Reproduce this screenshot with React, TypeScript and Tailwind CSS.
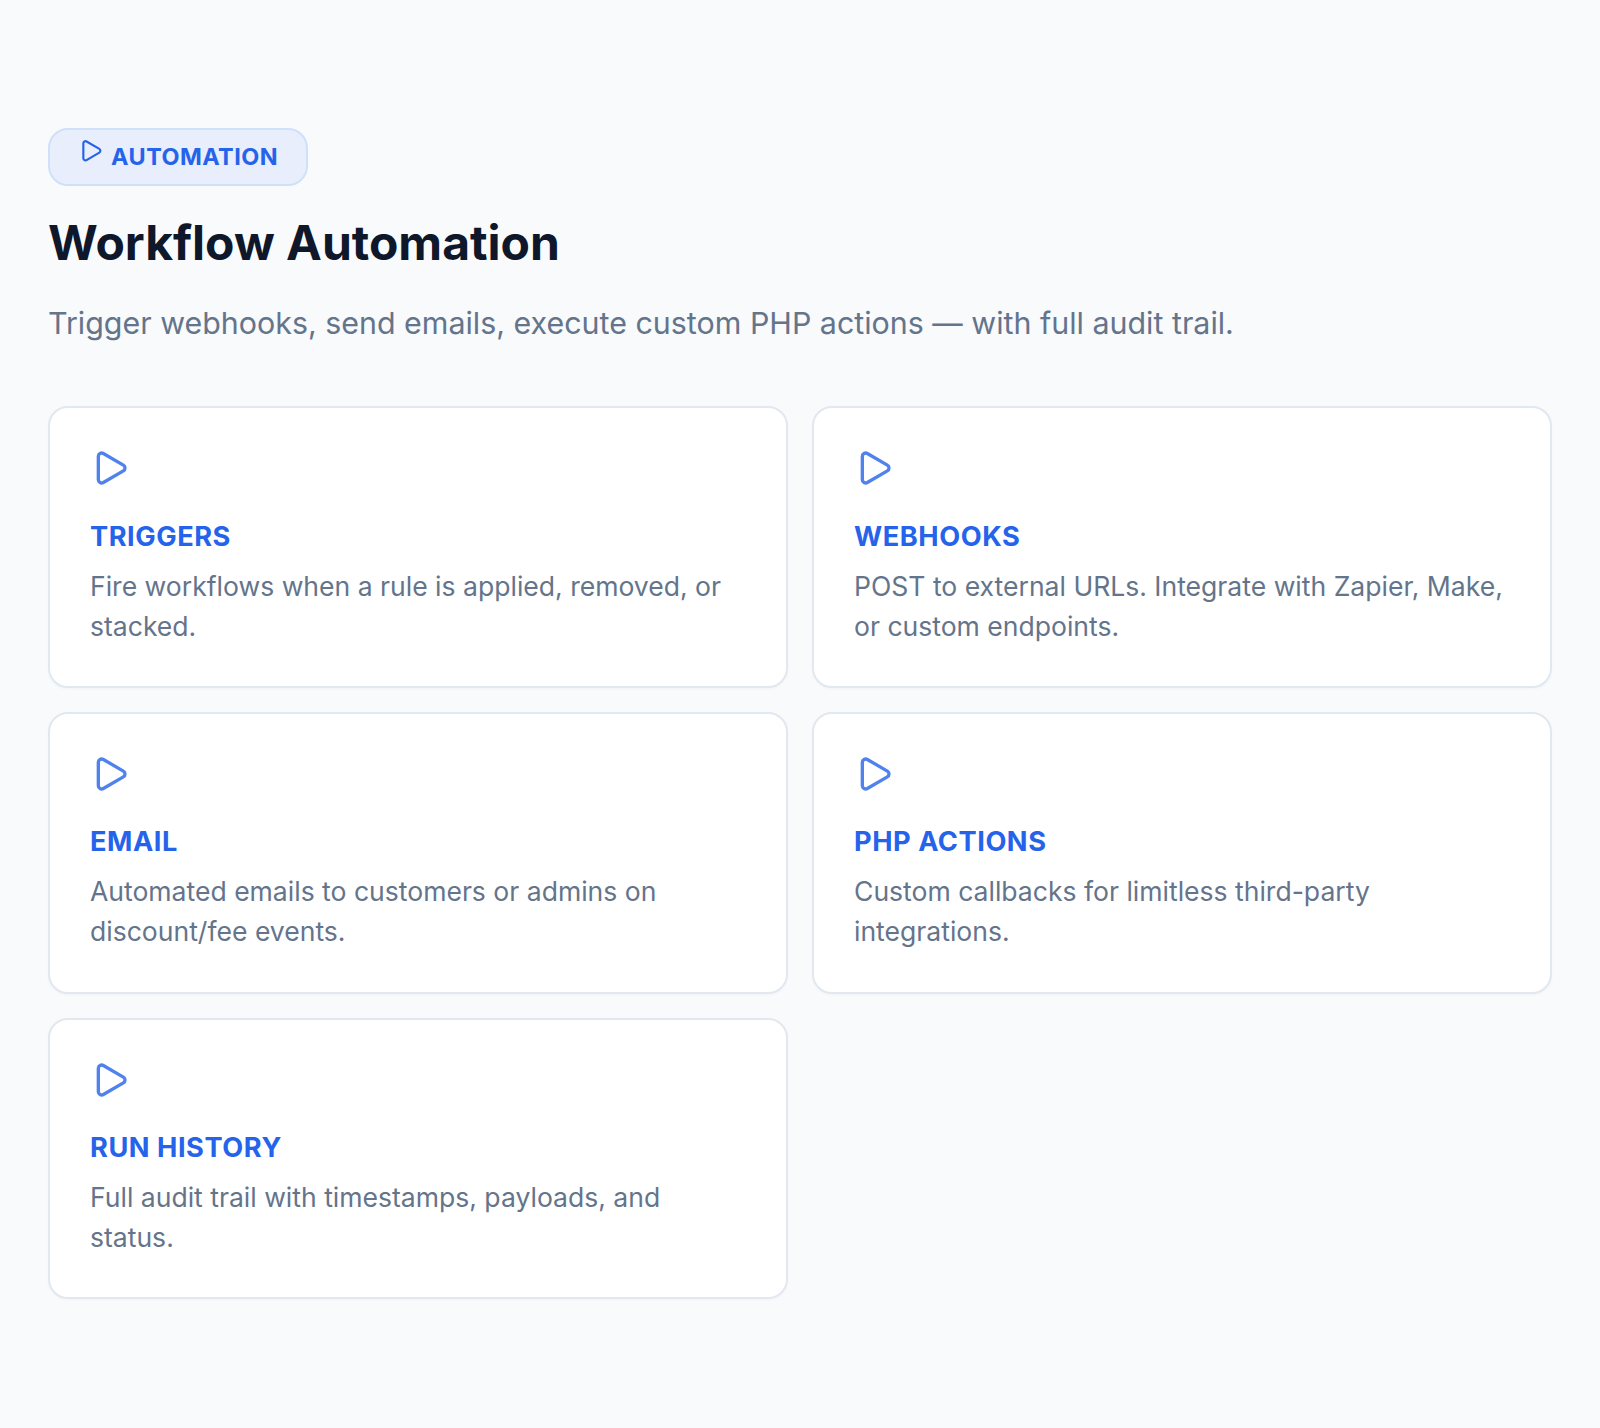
import { Play } from "lucide-react";

const cards = [
  { title: "TRIGGERS", text: "Fire workflows when a rule is applied, removed, or stacked." },
  { title: "WEBHOOKS", text: "POST to external URLs. Integrate with Zapier, Make, or custom endpoints." },
  { title: "EMAIL", text: "Automated emails to customers or admins on discount/fee events." },
  { title: "PHP ACTIONS", text: "Custom callbacks for limitless third-party integrations." },
  { title: "RUN HISTORY", text: "Full audit trail with timestamps, payloads, and status." },
];

export default function App() {
  return (
    <div className="min-h-[1428px] bg-[#f8fafc] px-12 pt-[128px] font-['Inter',sans-serif] text-[#0f172a]">
      <div className="inline-block rounded-[20px] border-2 border-[#cfe0fa] bg-[#e8eefb] px-[27.5px] pt-[8px] pb-[11px] text-[23.4px] leading-[1.4] font-bold tracking-[0.02em] text-[#2563eb]">
        <Play className="mr-2 mb-px inline-block h-[25.6px] w-[25.6px] align-baseline" />
        AUTOMATION
      </div>
      <h1 className="mt-[28px] text-[48px] leading-[1.2] font-bold">Workflow Automation</h1>
      <p className="mt-[30px] text-[30.4px] leading-[1.4] text-[#64748b]">
        Trigger webhooks, send emails, execute custom PHP actions — with full audit trail.
      </p>
      <div className="mt-[61.5px] grid grid-cols-2 gap-6">
        {cards.map((c) => (
          <div key={c.title} className="rounded-[20px] border-2 border-[#e2e8f0] bg-white px-10 pt-10 pb-[40.2px] shadow-[0_1px_3px_rgba(15,23,42,0.03)]">
            <Play className="h-10 w-10 text-[#2563eb] opacity-80" />
            <h3 className="mt-[29.5px] text-[27.2px] leading-[1.4] font-bold tracking-[0.02em] text-[#2563eb]">{c.title}</h3>
            <p className="mt-[10px] text-[26.56px] leading-[40px] text-[#64748b]">{c.text}</p>
          </div>
        ))}
      </div>
    </div>
  );
}
